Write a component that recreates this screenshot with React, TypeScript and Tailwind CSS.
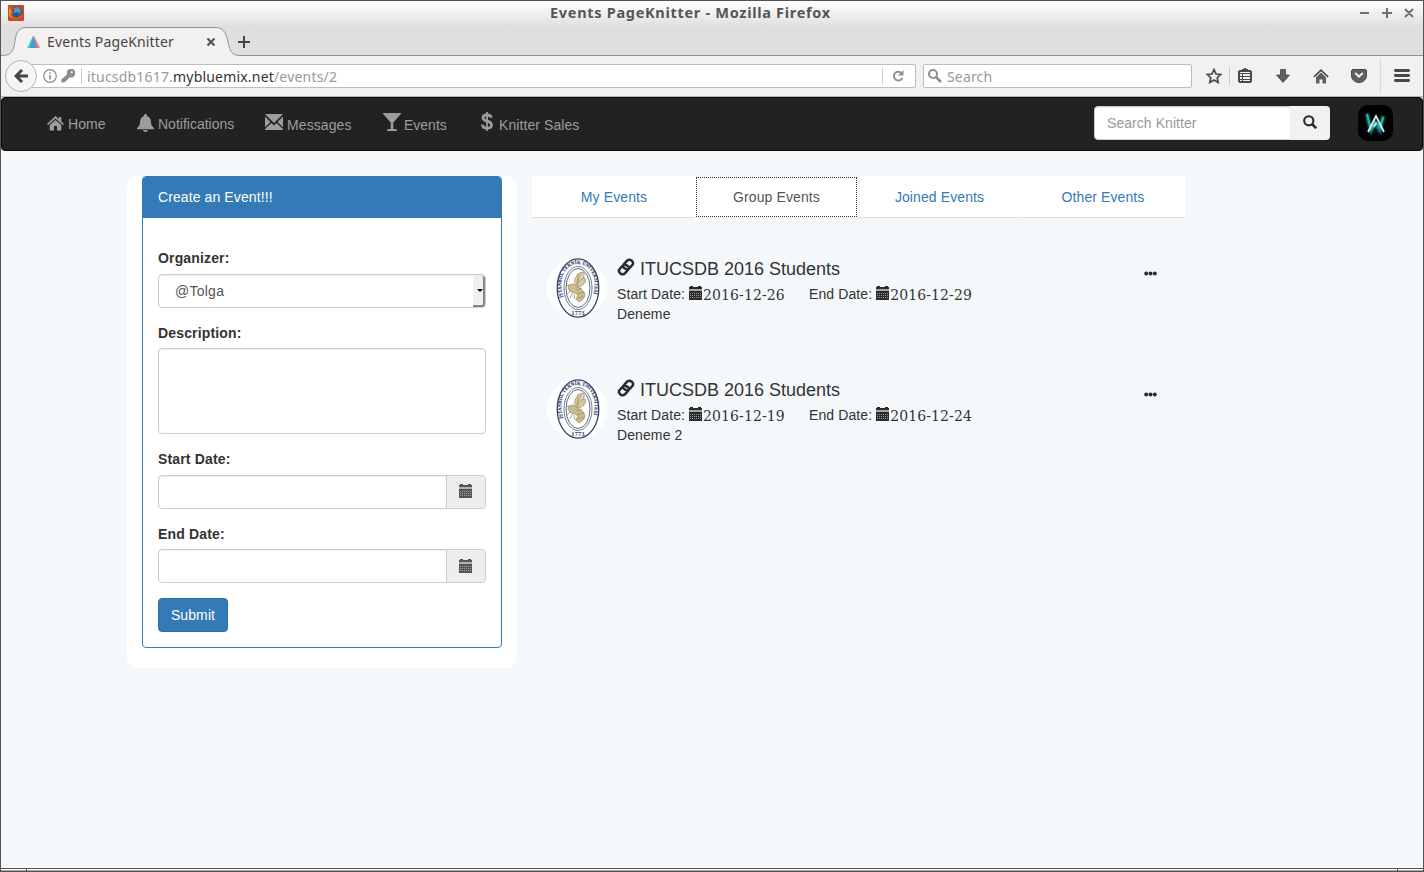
import React from "react";

const UI = "font-['Noto_Sans','Open_Sans',sans-serif]";

function Calendar({ className }: { className: string }) {
  return (
    <svg viewBox="0 0 13 14" className={`w-[13px] h-[14px] shrink-0 ${className}`} shapeRendering="crispEdges">
      <path fill="currentColor" d="M0 1h1V0h3v1h5V0h3v1h1v2H0z" />
      <path fill="currentColor" opacity=".4" d="M0 3h13v2H0z" />
      <path fill="currentColor" d="M0 5h13v9H0z" />
      <g fill="#b9bcc0" opacity=".75">
        {[7, 9, 11].map((y) =>
          [1, 3, 5, 7, 9, 11].map((x) => <rect key={`${x}-${y}`} x={x} y={y} width="1" height="1" />)
        )}
      </g>
    </svg>
  );
}

function TitleBar() {
  return (
    <div className="relative h-[26px] shrink-0 bg-gradient-to-b from-white to-[#dfdfdf] flex items-center justify-between pl-[7px] pr-[9px]">
      <svg viewBox="0 0 16 16" className="w-4 h-4 -mt-[2px]">
        <rect width="16" height="16" rx="1" fill="#c94a1c" />
        <circle cx="8.5" cy="7.5" r="6" fill="#245a94" />
        <path d="M6 3l4-1 3 3-1 4-3-2-3 1z" fill="#5794c4" />
        <path d="M1 1l3 2 2-1-2 3 1 3-1 2 2 2 3 1 4-3 1-3 0 4-5 4-5-2-3-5z" fill="#e05f18" />
        <path d="M1 4l2 1-1 5 3 4-4-3z" fill="#f09a23" />
      </svg>
      <div className={`absolute left-[549px] top-0 h-[23px] leading-[23px] text-[14.5px] font-bold text-[#555] whitespace-nowrap tracking-[0.7px] ${UI}`}>
        Events PageKnitter - Mozilla Firefox
      </div>
      <svg viewBox="0 0 56 12" className="w-[56px] h-3 mb-[3px]" stroke="#6f6f6f" strokeWidth="2" fill="none">
        <path d="M2 6h9M24 6h10M29 1v10M47 2l8 8M55 2l-8 8" />
      </svg>
    </div>
  );
}

function TabStrip() {
  return (
    <div className="relative h-[29px] shrink-0 bg-[#dfdfdf] flex items-center">
      <svg viewBox="0 0 1422 29" className="absolute left-0 top-0 w-[1422px] h-[29px]" fill="none">
        <path d="M0 28.500C10 28.500 12 25 13.500 17C15 5 17 .5 26 .5H214C222 .5 225 5 227 15C229 25 231 28.500 240 28.500V29H0z" fill="#f2f1f0" />
        <path d="M0 28.500C10 28.500 12 25 13.500 17C15 5 17 .5 26 .5H214C222 .5 225 5 227 15C229 25 231 28.500 240 28.500H1422" stroke="#90949a" />
      </svg>
      <div className="relative flex items-center h-full w-full">
        <svg viewBox="0 0 13 12" className="w-[13px] h-3 ml-[26px]">
          <path d="M6 0L0 12h6z" fill="#40d0c0" />
          <path d="M6 0l1 0 6 12H9z" fill="#e77a8b" />
          <path d="M6 0L3 12h7z" fill="#4a9bd0" />
        </svg>
        <span className={`ml-[7px] w-[160px] text-[14px] leading-5 text-[#444] whitespace-nowrap tracking-[0.14px] ${UI}`}>Events PageKnitter</span>
        <svg viewBox="0 0 8 8" className="w-2 h-2" stroke="#555" strokeWidth="2.2"><path d="M.5.5l7 7M7.500.5l-7 7" /></svg>
        <svg viewBox="0 0 12 12" className="w-3 h-3 ml-[23px]" stroke="#444" strokeWidth="2"><path d="M0 6h12M6 0v12" /></svg>
      </div>
    </div>
  );
}

function Toolbar() {
  return (
    <div className="relative h-[41px] shrink-0 bg-[#f2f1f0] border-b border-[#b8b8b8]">
      <div className="h-10 flex items-center">
        <div className="ml-[20px] w-[895px] h-6 bg-white border border-[#bfbcb9] rounded-[2px] flex items-center shrink-0">
          <svg viewBox="0 0 14 14" className="w-[14px] h-[14px] ml-[21px]" fill="none" stroke="#8b8b8b">
            <circle cx="7" cy="7" r="6.300" strokeWidth="1.200" />
            <path d="M7 6v4.500M7 3.200v1.600" strokeWidth="1.600" />
          </svg>
          <svg viewBox="0 0 14 14" className="w-[14px] h-[14px] ml-[4px]">
            <path d="M8 0h4l2 2v4l-2 2.500H8.500L3.500 13.500H1L.3 12.500v-2L6 5.500V2z" fill="#8d8d8d" />
            <circle cx="10.800" cy="3.200" r="1" fill="#fff" />
          </svg>
          <span className="w-px h-4 bg-[#ccc] ml-[6px]" />
          <span className={`ml-[5px] mt-px text-[14px] leading-5 text-[#999] whitespace-nowrap tracking-[0.19px] ${UI}`}>
            itucsdb1617.<span className="text-[#333]">mybluemix.net</span>/events/2
          </span>
          <span className="w-px h-4 bg-[#ccc] ml-auto" />
          <svg viewBox="0 0 12 12" className="w-3 h-3 ml-[9px] mr-[11px]" fill="none" stroke="#8693a3" strokeWidth="2">
            <path d="M9.500 3.200A4.400 4.400 0 1 0 10.300 8" />
            <path d="M11.500 0v5.500H6z" fill="#8693a3" stroke="none" />
          </svg>
        </div>
        <div className="ml-[7px] w-[269px] h-6 bg-white border border-[#bfbcb9] rounded-[2px] flex items-center shrink-0">
          <svg viewBox="0 0 14 14" className="w-[14px] h-[14px] ml-[4px]" fill="none" stroke="#8d8d8d">
            <circle cx="5" cy="5" r="4" strokeWidth="2" /><path d="M8 8l5 5" strokeWidth="2.500" />
          </svg>
          <span className={`ml-[5px] mt-px text-[14px] leading-5 text-[#999] tracking-[0.15px] ${UI}`}>Search</span>
        </div>
        <svg viewBox="0 0 16 16" className="w-4 h-4 ml-[14px] shrink-0" fill="none" stroke="#4a4a4a" strokeWidth="1.700">
          <path d="M8 1.500l2 4.500 4.800.5-3.600 3.200 1 4.800L8 12l-4.200 2.500 1-4.800L1.200 6.500 6 6z" />
        </svg>
        <span className="w-px h-[18px] bg-[#ccc] ml-[7px]" />
        <svg viewBox="0 0 14 15" className="w-[14px] h-[15px] ml-[8px] mb-px shrink-0" shapeRendering="crispEdges">
          <path d="M1 2h3V1h2V0h2v1h2v1h3v1h1v11h-1v1H1v-1H0V3h1z" fill="#4a4a4a" />
          <path d="M2 4h10v1H2zM2 6h2v2H2zM5 6h7v2H5zM2 9h2v2H2zM5 9h7v2H5zM2 12h2v1H2zM5 12h7v1H5z" fill="#f2f1f0" />
        </svg>
        <svg viewBox="0 0 14 14" className="w-[14px] h-[14px] ml-[24px] shrink-0"><path d="M4.500.5h5V6h4L7 13.500.500 6h4z" fill="#606060" stroke="#444" strokeWidth=".8" /></svg>
        <svg viewBox="0 0 16 15" className="w-4 h-[15px] ml-[23px] shrink-0">
          <path d="M.8 8L8 1.200 15.200 8" fill="none" stroke="#484848" strokeWidth="1.700" />
          <path d="M3 8.300l5-4.800 5 4.800V14.500H9.500v-4h-3v4H3z" fill="#606060" />
        </svg>
        <svg viewBox="0 0 16 14" className="w-4 h-[14px] ml-[22px] shrink-0">
          <path d="M1.500.5h13l1 1v5c0 4-3.500 7-7.500 7S.5 10.500.5 6.500v-5z" fill="#606060" stroke="#454545" />
          <path d="M4.200 4L8 7.700 11.800 4" stroke="#f2f1f0" strokeWidth="2" fill="none" />
        </svg>
        <span className="w-px h-9 bg-[#dad8d6] ml-[13px]" />
        <svg viewBox="0 0 16 13" className="w-4 h-[13px] ml-[13px] mb-px shrink-0" stroke="#484848" strokeWidth="2.800" strokeLinecap="round">
          <path d="M1.400 1.500h13.200M1.400 6.500h13.200M1.400 11.500h13.200" />
        </svg>
      </div>
      <div className="absolute left-[4px] top-[4px] w-8 h-8 rounded-full bg-[#f6f5f4] border border-[#b5b2b0] flex items-center justify-center">
        <svg viewBox="0 0 14 14" className="w-[14px] h-[14px]" fill="none" stroke="#444" strokeWidth="3"><path d="M14 7H3M8 1L2 7l6 6" /></svg>
      </div>
    </div>
  );
}

function Navbar() {
  const label = "text-[14px] leading-5 text-[#9d9d9d] whitespace-nowrap";
  return (
    <div className="h-[55px] shrink-0 font-['Liberation_Sans',sans-serif]">
      <div className="h-[54px] bg-[#222] border border-[#080808] rounded-[4px] flex items-center">
        <div className="flex items-center ml-[45px] w-[90px]">
          <svg viewBox="0 0 17 15" className="w-[17px] h-[15px] mb-[2px]" fill="#9d9d9d">
            <path d="M8.500 0l3.500 3V1h2.300v4.500L17 8l-1 1.200L8.500 2.500 1 9.200 0 8z" /><path d="M8.500 4L14.300 9v5.500H10V10H7v4.500H2.700V9z" />
          </svg>
          <span className={`${label} ml-[4px] tracking-[0.1px]`}>Home</span>
        </div>
        <div className="flex items-center w-[128px]">
          <svg viewBox="0 0 17 18" className="w-[17px] h-[18px] mb-[2px]" fill="#9d9d9d">
            <path d="M8.500 0c.9 0 1.500.7 1.500 1.500v.4c2.700.8 3.700 3 3.900 5.600.2 3 .6 4.500 3.100 6.500v1.300H0V14c2.500-2 2.900-3.500 3.100-6.500C3.300 4.900 4.300 2.700 7 1.900v-.4C7 .7 7.600 0 8.500 0zM6 16h5c-.3 1.300-1.200 2-2.500 2S6.300 17.300 6 16z" />
          </svg>
          <span className={`${label} ml-[4px]`}>Notifications</span>
        </div>
        <div className="flex items-center w-[118px]">
          <svg viewBox="0 0 18 16" className="w-[18px] h-4 mb-[4px]" fill="#9d9d9d">
            <path d="M0 0h18L9 9zM0 2.500L5.500 8 0 13.200zM18 2.500L12.500 8 18 13.200zM6.500 9L9 11.500 11.500 9l6.500 6v1H0v-1z" />
          </svg>
          <span className={`${label} ml-[4px] mt-[2px] tracking-[0.1px]`}>Messages</span>
        </div>
        <div className="flex items-center w-[96px]">
          <svg viewBox="0 0 18 18" className="w-[18px] h-[18px] mb-[4px]" fill="#9d9d9d">
            <path d="M0 0h18v.8L10.300 9.500V16H13l1 1.200v.8H4v-.8L5 16h2.700V9.500L0 .8z" />
          </svg>
          <span className={`${label} ml-[3px] mt-[2px]`}>Events</span>
        </div>
        <div className="flex items-center">
          <svg viewBox="0 0 12 19" className="w-3 h-[19px] mb-[5px] ml-[2px]" fill="none" stroke="#9d9d9d" strokeWidth="2.700">
            <path d="M10.300 5.800C10 3.600 8.500 2.800 6 2.800c-2.600 0-4 1-4 3C2 10.500 10.500 7.800 10.500 13c0 2-1.700 3.200-4.500 3.200-2.800 0-4.400-1.200-4.600-3.600" />
            <path d="M6 0v19" strokeWidth="1.800" />
          </svg>
          <span className={`${label} ml-[6px] mt-[2px] tracking-[0.08px]`}>Knitter Sales</span>
        </div>
        <div className="ml-auto mr-[28px] mb-[2px] flex w-[236px] h-[34px] rounded-[4px] overflow-hidden">
          <div className="w-[196px] bg-white border border-[#ccc] rounded-l-[4px] border-r-0 pl-3 text-[14px] leading-8 text-[#999] tracking-[0.06px] shadow-[inset_0_1px_1px_rgba(0,0,0,.075)]">Search Knitter</div>
          <div className="w-[40px] bg-[#f2f1f0] flex items-center justify-center">
            <svg viewBox="0 0 14 14" className="w-[14px] h-[14px] mb-[2px]" fill="none" stroke="#2b2b2b">
              <circle cx="5.800" cy="5.800" r="4.600" strokeWidth="2.100" /><path d="M9 9l4.200 4.200" strokeWidth="2.600" />
            </svg>
          </div>
        </div>
        <svg viewBox="0 0 35 36" className="w-[35px] h-9 mr-[29px] mb-[2px]" fill="none">
          <defs><filter id="glow" x="-50%" y="-50%" width="200%" height="200%"><feGaussianBlur stdDeviation="1.300" /></filter></defs>
          <rect width="35" height="36" rx="10" fill="#000" />
          <path d="M9 9l4 17 4-9 5 9 3-15" stroke="#1a9c93" strokeWidth="3" filter="url(#glow)" />
          <path d="M9 9l3.500 14 4.500-7M25.500 12L22 22l-4-5M13 25l4-7" stroke="#22b5a8" strokeWidth="2" />
          <path d="M10 27L18 11l8 16M15.500 22l3-4" stroke="#dce8e8" strokeWidth="1.800" />
        </svg>
      </div>
    </div>
  );
}

const LABEL = "block h-5 leading-5 font-bold tracking-[0.15px]";
const FIELD = "bg-white border border-[#ccc] rounded-[4px] shadow-[inset_0_1px_1px_rgba(0,0,0,.075)]";

function DateField({ className, iconClass }: { className: string; iconClass: string }) {
  return (
    <div className={`flex h-[34px] ${FIELD} overflow-hidden ${className}`}>
      <div className="flex-1" />
      <div className="w-[39px] bg-[#eee] border-l border-[#ccc] flex justify-start pl-[12px] text-[#555]">
        <Calendar className={iconClass} />
      </div>
    </div>
  );
}

function CreatePanel() {
  return (
    <div className="w-[390px] h-[492px] bg-white rounded-[10px] px-[15px] shrink-0">
      <div className="h-[472px] border border-[#337ab7] rounded-[4px] flex flex-col overflow-hidden">
        <div className="h-[41px] shrink-0 bg-[#337ab7] text-white pl-[15px] leading-[40px]">Create an Event!!!</div>
        <div className="px-[15px] pt-[30px]">
          <span className={LABEL}>Organizer:</span>
          <div className={`mt-[6px] h-[34px] flex pl-4 leading-8 text-[#555] tracking-[0.25px] ${FIELD}`}>
            @Tolga
            <span className="ml-auto mt-px w-3 h-[31px] bg-[#f0f0f0] border-r-2 border-b-2 border-[#858585] rounded-r-[3px] flex items-center justify-end">
              <svg viewBox="0 0 6 3" className="w-[6px] h-[3px]"><path d="M0 0h6L3 3z" /></svg>
            </span>
          </div>
          <span className={`${LABEL} mt-[15px]`}>Description:</span>
          <div className={`mt-[5px] h-[86px] ${FIELD}`} />
          <span className={`${LABEL} mt-[15px]`}>Start Date:</span>
          <DateField className="mt-[6px]" iconClass="mt-[8px]" />
          <span className={`${LABEL} mt-[15px]`}>End Date:</span>
          <DateField className="mt-[5px]" iconClass="mt-[9px]" />
          <button className="block mt-[15px] w-[70px] h-[34px] leading-8 text-center bg-[#337ab7] border border-[#2e6da4] rounded-[4px] text-white">Submit</button>
        </div>
      </div>
    </div>
  );
}

function Seal({ id }: { id: string }) {
  return (
    <svg viewBox="0 0 60 60" className="w-[60px] h-[60px] shrink-0" fill="none">
      <defs><path id={id} d="M16.500 39C10 22 18 6 31 6S52 22 45.500 39" /></defs>
      <circle cx="30" cy="30" r="30" fill="#fff" />
      <ellipse cx="31" cy="30" rx="20.800" ry="29.200" stroke="#33436b" strokeWidth="1.300" />
      <ellipse cx="31" cy="30" rx="14" ry="21.500" stroke="#33436b" strokeWidth=".7" />
      <ellipse cx="31" cy="30" rx="12" ry="19.500" stroke="#33436b" strokeWidth=".8" />
      <text fontFamily="Liberation Serif" fontWeight="bold" fontSize="5.200" fill="#33436b" stroke="#33436b" strokeWidth=".15">
        <textPath href={`#${id}`} startOffset="0" textLength="81" lengthAdjust="spacingAndGlyphs">İSTANBUL TEKNİK ÜNİVERSİTESİ</textPath>
      </text>
      <text x="31" y="56.800" textAnchor="middle" fontFamily="Liberation Serif" fontWeight="bold" fontSize="6.500" fill="#33436b">1773</text>
      <g stroke="#a08f62" strokeWidth=".8">
        <path d="M29 27C25 24 30 14 36 14c3 2 0 9-6 13z" fill="#ded5b8" />
        <path d="M30 28c1-5 5-8 8-8 2 4-2 8-7 9z" fill="#d4c9a4" />
        <path d="M22 27l4-1 5 3 4 3c3 2 4 6 1 9l-4 3-3-3 2-4-3-2-5-2-2-3z" fill="#cbbd90" />
        <path d="M29 32l6-2M30 36l7-2M31 40l6-2M24 32l-4 4M26 34l-3 6M27 36l1 5M22 27l-3 1M31 15l-1 11M34 15l-4 10" />
      </g>
    </svg>
  );
}

function EventDate({ value }: { value: string }) {
  return (
    <>
      <Calendar className="ml-[4px] mb-[3px] text-[#2c2c2c]" />
      <span className="ml-px font-['DejaVu_Serif',serif] text-[14px] leading-5 tracking-[0.11px] pt-[2px]">{value}</span>
    </>
  );
}

function EventItem({ id, start, end, text }: { id: string; start: string; end: string; text: string }) {
  return (
    <div className="flex h-[121px] pl-[15px]">
      <Seal id={id} />
      <div className="ml-[10px] w-[527px] -mt-px text-[#333]">
        <div className="flex items-center h-[27px] pb-[3px] text-[18px] leading-6 whitespace-nowrap tracking-normal">
          <svg viewBox="0 0 18 18" className="w-[18px] h-[18px] mr-[5px] mb-[4px]" fill="none" stroke="#2c2c2c" strokeWidth="2.500">
            <path d="M10.500 11.300C7 11 5 8.500 6.800 6.300L10.300 2.500C12.800 .3 17.300 3.600 15.700 6.600L12.500 10.200" />
            <path d="M7.500 6.700C11 7 13 9.500 11.200 11.700L7.700 15.500C5.200 17.700 .7 14.400 2.300 11.400L5.500 7.800" />
          </svg>
          ITUCSDB 2016 Students
        </div>
        <div className="flex items-center h-5 text-[14px] leading-5 whitespace-nowrap">
          <div className="flex items-center w-[192px]">Start Date:<EventDate value={start} /></div>
          <div className="flex items-center">End Date:<EventDate value={end} /></div>
        </div>
        <div className="text-[14px] leading-5">{text}</div>
      </div>
      <svg viewBox="0 0 13 5" className="w-[13px] h-[5px] mt-[13px]" fill="#2c2c2c">
        <circle cx="2.200" cy="2.500" r="2" /><circle cx="6.500" cy="2.500" r="2" /><circle cx="10.800" cy="2.500" r="2" />
      </svg>
    </div>
  );
}

export default function App() {
  const tab = "h-[42px] bg-white border-b border-[#ddd] text-center leading-[42px] text-[#337ab7]";
  return (
    <div className="w-[1424px] h-[872px] border-x border-t border-[#555254] bg-[#f4f8fb] flex flex-col overflow-hidden">
      <TitleBar />
      <TabStrip />
      <Toolbar />
      <Navbar />
      <div className="flex-1 min-h-0 flex pt-[24px] pl-[126px] text-[14px] text-[#333] tracking-[0.1px] font-['Liberation_Sans',sans-serif]">
        <CreatePanel />
        <div className="ml-[15px] w-[653px]">
          <div className="flex h-[42px] bg-white">
            <div className={`${tab} w-[162px] mr-px pl-[2px]`}>My Events</div>
            <div className="w-[163px] h-[42px] border-b border-[#f4f8fb] px-px pt-px">
              <div className="w-full h-10 border border-dotted border-[#333] text-center leading-[38px] text-[#555]">Group Events</div>
            </div>
            <div className={`${tab} w-[162px] mr-px pl-px`}>Joined Events</div>
            <div className={`${tab} w-[164px]`}>Other Events</div>
          </div>
          <div className="pt-[40px]">
            <EventItem id="seal-a" start="2016-12-26" end="2016-12-29" text="Deneme" />
            <EventItem id="seal-b" start="2016-12-19" end="2016-12-24" text="Deneme 2" />
          </div>
        </div>
      </div>
      <div className="h-1 shrink-0 bg-white border-t border-b border-[#555254] flex">
        <span className="w-[25px] border-b border-[#aaa]" />
        <span className="w-px bg-[#555254]" />
        <span className="flex-1 border-b border-[#aaa]" />
        <span className="w-px bg-[#555254]" />
        <span className="w-[25px] border-b border-[#aaa]" />
      </div>
    </div>
  );
}
